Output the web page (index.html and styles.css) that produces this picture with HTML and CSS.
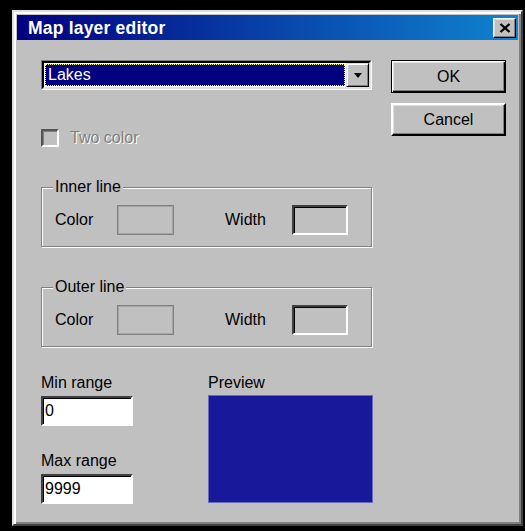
FILE: index.html
```html
<!DOCTYPE html>
<html lang="en">
<head>
<meta charset="utf-8">
<title>Map layer editor</title>
<link rel="stylesheet" href="styles.css">
</head>
<body>
<div class="window">
  <div class="titlebar">
    <span class="title">Map layer editor</span>
    <button class="close" type="button" aria-label="Close">
      <svg width="12" height="10" viewBox="0 0 12 10"><path d="M1.5 1 L10.5 9 M10.5 1 L1.5 9" stroke="#000" stroke-width="2.3" fill="none"/></svg>
    </button>
  </div>
  <div class="client">
    <div class="main-col">
      <div class="combo">
        <div class="combo-inner">
          <div class="combo-value">Lakes</div>
          <div class="combo-btn"><span class="arrow"></span></div>
        </div>
      </div>

      <div class="check-row">
        <span class="checkbox"></span>
        <span class="disabled-text">Two color</span>
      </div>

      <div class="group group-inner">
        <div class="group-title">Inner line</div>
        <div class="group-row">
          <span class="lbl lbl-color">Color</span>
          <span class="swatch"></span>
          <span class="lbl lbl-width">Width</span>
          <span class="field field-gray"></span>
        </div>
      </div>

      <div class="group group-outer">
        <div class="group-title">Outer line</div>
        <div class="group-row">
          <span class="lbl lbl-color">Color</span>
          <span class="swatch"></span>
          <span class="lbl lbl-width">Width</span>
          <span class="field field-gray"></span>
        </div>
      </div>

      <div class="bottom">
        <div class="ranges">
          <div class="lbl">Min range</div>
          <div class="field field-white">0</div>
          <div class="lbl lbl-max">Max range</div>
          <div class="field field-white">9999</div>
        </div>
        <div class="preview">
          <div class="lbl">Preview</div>
          <div class="preview-box"></div>
        </div>
      </div>
    </div>

    <div class="side-col">
      <button class="btn btn-default" type="button">OK</button>
      <button class="btn" type="button">Cancel</button>
    </div>
  </div>
</div>
</body>
</html>
```

FILE: styles.css
```css
html, body {
  margin: 0;
  padding: 0;
  background: #000;
}

body {
  font-family: "Liberation Sans", Arial, sans-serif;
  font-size: 16px;
  line-height: 20px;
  color: #000;
}

/* dialog frame with the classic raised bevel */
.window {
  box-sizing: border-box;
  width: 511px;
  height: 516px;
  margin: 10px 0 0 12px;
  background: #c0c0c0;
  border: 2px solid;
  border-color: #dfdfdf #404040 #404040 #dfdfdf;
  box-shadow: inset 2px 2px #fff, inset -2px -2px #808080;
  padding: 3px;
}

.titlebar {
  height: 25px;
  display: flex;
  align-items: center;
  justify-content: space-between;
  padding-left: 11px;
  background: linear-gradient(to right, #000080, #1084d0);
}

.title {
  font-family: "Liberation Sans", Arial, sans-serif;
  font-weight: bold;
  font-size: 17.5px;
  color: #fff;
  letter-spacing: 0.2px;
}

.close {
  box-sizing: border-box;
  width: 23px;
  height: 20px;
  margin-right: 2px;
  padding: 0;
  display: flex;
  align-items: center;
  justify-content: center;
  background: #c0c0c0;
  border: 1px solid;
  border-color: #fff #000 #000 #fff;
  box-shadow: inset -1px -1px #808080, inset 1px 1px #dfdfdf;
}

.client {
  display: grid;
  grid-template-columns: 331px 115px;
  column-gap: 19px;
  padding: 20px 0 0 24px;
}

/* drop-down list */
.combo {
  box-sizing: border-box;
  height: 30px;
  border: 1px solid;
  border-color: #808080 #fff #fff #808080;
}

.combo-inner {
  box-sizing: border-box;
  height: 100%;
  display: flex;
  border: 2px solid;
  border-color: #000 #dfdfdf #dfdfdf #000;
  background: #fff;
}

.combo-value {
  flex: 1;
  margin: 1px;
  padding-left: 2px;
  background: #000080;
  border: 1px dotted #ffff66;
  color: #fff;
  line-height: 20px;
}

.combo-btn {
  box-sizing: border-box;
  width: 23px;
  display: flex;
  align-items: center;
  justify-content: center;
  background: #c0c0c0;
  border: 1px solid;
  border-color: #dfdfdf #000 #000 #dfdfdf;
  box-shadow: inset 1px 1px #fff, inset -1px -1px #808080;
}

.arrow {
  width: 0;
  height: 0;
  border-left: 4px solid transparent;
  border-right: 4px solid transparent;
  border-top: 5px solid #000;
  margin-top: 1px;
}

/* disabled check box */
.check-row {
  display: flex;
  align-items: center;
  margin-top: 39px;
  height: 18px;
}

.checkbox {
  box-sizing: border-box;
  width: 18px;
  height: 18px;
  background: #c0c0c0;
  border: 2px solid;
  border-color: #555 #fff #fff #555;
  box-shadow: inset 1px 1px #808080;
}

.disabled-text {
  margin-left: 11px;
  color: #808080;
  text-shadow: 1px 1px #fff;
}

/* etched group boxes */
.group {
  border: 1px solid #808080;
  box-shadow: inset 1px 1px #fff, 1px 1px #fff;
  padding: 0 0 11px 0;
}

.group-inner {
  margin-top: 40px;
}

.group-outer {
  margin-top: 40px;
}

.group-title {
  width: max-content;
  margin: -11px 0 0 11px;
  padding: 0 2px;
  background: #c0c0c0;
  line-height: 20px;
}

.group-row {
  display: flex;
  align-items: center;
  height: 30px;
  margin-top: 8px;
  padding-left: 13px;
}

.lbl-color {
  width: 62px;
}

.lbl-width {
  width: 67px;
  margin-left: 51px;
}

.swatch {
  box-sizing: border-box;
  width: 57px;
  height: 30px;
  border: 1px solid #808080;
  box-shadow: inset 0 0 0 1px #a4a4a4;
}

/* sunken edit fields */
.field {
  box-sizing: border-box;
  height: 30px;
  border: 2px solid;
  border-color: #404040 #fff #fff #404040;
  box-shadow: inset 1px 1px #000;
  padding-left: 2px;
  line-height: 26px;
}

.field-gray {
  width: 56px;
  background: #c0c0c0;
}

.field-white {
  width: 92px;
  background: #fff;
  margin-top: 3px;
}

.bottom {
  display: grid;
  grid-template-columns: 92px 165px;
  column-gap: 75px;
  margin-top: 26px;
}

.lbl-max {
  margin-top: 25px;
}

.preview-box {
  box-sizing: border-box;
  height: 108px;
  margin-top: 2px;
  background: #18199a;
  border: 1px solid #6a6ac0;
}

/* push buttons */
.side-col {
  display: flex;
  flex-direction: column;
  gap: 10px;
}

.btn {
  box-sizing: border-box;
  height: 33px;
  padding: 0;
  font-family: inherit;
  font-size: 16px;
  color: #000;
  background: #c0c0c0;
  border: 2px solid;
  border-color: #fff #000 #000 #fff;
  box-shadow: inset -1px -1px #808080, inset 1px 1px #dfdfdf;
}

.btn-default {
  border: 1px solid #000;
  box-shadow: inset 1px 1px #fff, inset -1px -1px #000, inset -2px -2px #808080, inset 2px 2px #dfdfdf;
}
```
